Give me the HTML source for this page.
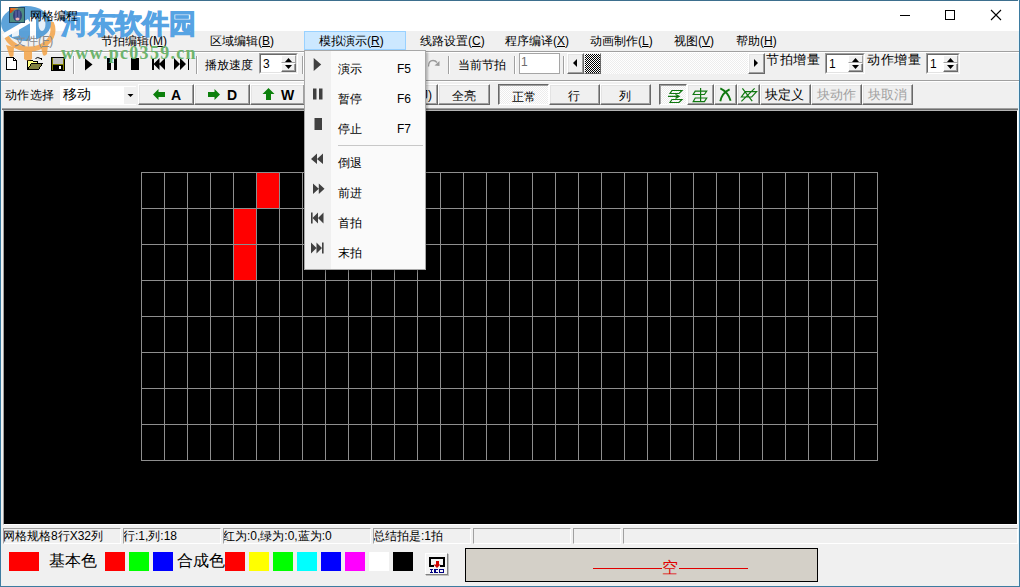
<!DOCTYPE html>
<html><head><meta charset="utf-8">
<style>
*{margin:0;padding:0;box-sizing:border-box}
html,body{width:1020px;height:587px;overflow:hidden;background:#f0f0f0;font-family:"Liberation Sans",sans-serif;color:#000}
.a{position:absolute}
.t{position:absolute;white-space:nowrap;font-size:12px;line-height:14px;font-weight:500}
/* raised button */
.btn{position:absolute;background:#f0f0f0;border-top:1px solid #fff;border-left:1px solid #fff;border-right:1px solid #696969;border-bottom:1px solid #696969;box-shadow:inset -1px -1px 0 #a0a0a0, inset 1px 1px 0 #e3e3e3;text-align:center;font-size:13px;white-space:nowrap}
.pbtn{position:absolute;background-color:#f6f6f6;background-image:repeating-conic-gradient(#fff 0 25%,#ececec 0 50%);background-size:2px 2px;border-top:1px solid #696969;border-left:1px solid #696969;border-right:1px solid #fff;border-bottom:1px solid #fff;box-shadow:inset 1px 1px 0 #a0a0a0;text-align:center;font-size:13px;white-space:nowrap}
.sep{position:absolute;width:2px;border-left:1px solid #a0a0a0;border-right:1px solid #fff}
.spin{position:absolute;background:#fff;border-top:1px solid #a0a0a0;border-left:1px solid #a0a0a0;border-right:1px solid #fff;border-bottom:1px solid #fff;box-shadow:inset 1px 1px 0 #696969, inset -1px -1px 0 #e3e3e3}
.panel{position:absolute;top:528px;height:16px;border-top:1px solid #a0a0a0;border-left:1px solid #a0a0a0;border-right:1px solid #fff;border-bottom:1px solid #fff;font-size:12px;line-height:14px;padding-left:0;text-indent:-1px;white-space:nowrap;overflow:hidden;font-weight:500}
.sw{position:absolute;top:552px;width:20px;height:19px}
.mi{position:absolute;left:338px;font-size:12px;line-height:14px;color:#000;font-weight:500}
.mk{position:absolute;left:397px;font-size:12px;line-height:14px}
</style></head><body>
<!-- window border -->
<div class="a" style="left:0;top:0;width:1020px;height:1px;background:#3d6f8e"></div>
<div class="a" style="left:0;top:0;width:1px;height:587px;background:#3d7ba0"></div>
<div class="a" style="left:1018px;top:0;width:2px;height:587px;background:#3d7ba0;border-left:1px solid #e4f4fb"></div>
<div class="a" style="left:0;top:586px;width:1020px;height:1px;background:#3d7ba0"></div>

<!-- title bar -->
<div class="a" style="left:1px;top:1px;width:1018px;height:30px;background:#fff"></div>

<div class="a" style="left:900px;top:15px;width:10px;height:1px;background:#000"></div>
<div class="a" style="left:945px;top:10px;width:10px;height:10px;border:1px solid #000"></div>
<svg class="a" style="left:990px;top:9px" width="12" height="12"><path d="M1 1L11 11M11 1L1 11" stroke="#000" stroke-width="1.1"/></svg>

<!-- menubar -->
<div class="a" style="left:1px;top:51px;width:1018px;height:1px;background:#a0a0a0"></div>
<div class="a" style="left:1px;top:52px;width:1018px;height:1px;background:#fff"></div>

<div class="t" style="left:101px;top:34px">节拍编辑(<u>M</u>)</div>
<div class="t" style="left:210px;top:34px">区域编辑(<u>B</u>)</div>
<div class="a" style="left:304px;top:31px;width:102px;height:19px;background:#cce8ff;border:1px solid #99d1ff"></div>
<div class="t" style="left:319px;top:34px">模拟演示(<u>R</u>)</div>
<div class="t" style="left:420px;top:34px">线路设置(<u>C</u>)</div>
<div class="t" style="left:505px;top:34px">程序编译(<u>X</u>)</div>
<div class="t" style="left:590px;top:34px">动画制作(<u>L</u>)</div>
<div class="t" style="left:674px;top:34px">视图(<u>V</u>)</div>
<div class="t" style="left:736px;top:34px">帮助(<u>H</u>)</div>

<!-- toolbar1 -->
<div class="a" style="left:1px;top:80px;width:1018px;height:1px;background:#a0a0a0"></div>
<div class="a" style="left:1px;top:81px;width:1018px;height:1px;background:#fff"></div>


<!-- toolbar1 icons -->
<svg class="a" style="left:0;top:52px" width="200" height="26" shape-rendering="crispEdges">
<!-- new -->
<path d="M6.5 5.5H13.5L16.5 8.5V17.5H6.5Z" fill="#fff" stroke="#000"/>
<path d="M13.5 5.5V8.5H16.5" fill="none" stroke="#000"/>
<!-- open -->
<path d="M27.5 8.5H32.5L33.5 9.5H37.5V11.5H31.5L27.5 17.5Z" fill="#ffff80" stroke="#000"/>
<path d="M27.5 17.5L31.5 11.5H42.5L38.5 17.5Z" fill="#808040" stroke="#000"/>
<path d="M35.5 6.5Q37.5 4.5 40.5 6.5" fill="none" stroke="#000" shape-rendering="auto"/>
<path d="M39 6H42V9Z" fill="#000"/>
<!-- save -->
<rect x="51.5" y="5.5" width="13" height="13" fill="#808000" stroke="#000"/>
<rect x="53" y="6" width="10" height="6" fill="#c0c0c0"/>
<rect x="53" y="13" width="10" height="5" fill="#000"/>
<rect x="59" y="14" width="2" height="3" fill="#fff"/>
<!-- play -->
<path d="M85 6.5L92.5 12.5L85 18.5Z" fill="#000" shape-rendering="auto"/>
<rect x="107" y="6" width="3.5" height="12" fill="#000"/>
<rect x="113.5" y="6" width="3.5" height="12" fill="#000"/>
<rect x="131" y="6" width="8" height="12" fill="#000"/>
<rect x="152" y="6" width="1.5" height="12" fill="#000"/>
<path d="M153.5 12L159.5 6V18Z M159 12L165 6V18Z" fill="#000" shape-rendering="auto"/>
<path d="M174 6L180 12L174 18Z M180 6L186 12L180 18Z" fill="#000" shape-rendering="auto"/>
<rect x="187.5" y="6" width="1.5" height="12" fill="#000"/>
</svg>
<div class="sep" style="left:73px;top:56px;height:18px"></div>
<div class="sep" style="left:196px;top:56px;height:18px"></div>
<div class="t" style="left:205px;top:57px;font-size:12px;line-height:16px">播放速度</div>
<div class="a" style="left:259px;top:53px;width:39px;height:21px;border-top:1px solid #a0a0a0;border-left:1px solid #a0a0a0;border-right:1px solid #fff;border-bottom:1px solid #fff">
<div class="a" style="left:0;top:0;right:0;bottom:0;border-top:1px solid #696969;border-left:1px solid #696969;border-right:1px solid #e3e3e3;border-bottom:1px solid #e3e3e3;background:#fff"></div>
<div class="t" style="left:3px;top:3px;font-size:12px;line-height:14px;font-weight:400">3</div>
<div class="a" style="right:1px;top:1px;width:15px;height:8px;background:#f0f0f0;border-top:1px solid #fff;border-left:1px solid #fff;border-right:1px solid #a0a0a0;border-bottom:1px solid #a0a0a0"><svg class="a" style="left:3px;top:2px" width="8" height="5"><path d="M0 4L3.5 0L7 4Z" fill="#000"/></svg></div>
<div class="a" style="right:1px;bottom:1px;width:15px;height:9px;background:#f0f0f0;border-top:1px solid #fff;border-left:1px solid #fff;border-right:1px solid #696969;border-bottom:1px solid #696969;box-shadow:inset -1px -1px 0 #a0a0a0"><svg class="a" style="left:3px;top:1px" width="8" height="5"><path d="M0 0L3.5 4L7 0Z" fill="#000"/></svg></div>
</div>
<div class="sep" style="left:302px;top:56px;height:18px"></div>
<!-- hidden under menu: undo/redo -->
<svg class="a" style="left:425px;top:56px" width="16" height="14"><path d="M3.5 10.5Q3.5 4.5 8 4.5Q10.5 4.5 12 6.5" fill="none" stroke="#9a9a9a" stroke-width="1.3"/><path d="M9.5 9.5L14.5 5V10Z" fill="#9a9a9a"/></svg>
<div class="sep" style="left:448px;top:56px;height:18px"></div>
<div class="t" style="left:458px;top:57px;font-size:12px;line-height:16px">当前节拍</div>
<div class="sep" style="left:514px;top:56px;height:18px"></div>
<div class="a" style="left:519px;top:53px;width:41px;height:21px;border:1px solid #a5a5a5;background:#fff"></div>
<div class="t" style="left:521px;top:55px;font-size:12px;line-height:14px;color:#6d6d6d">1</div>
<div class="sep" style="left:563px;top:56px;height:18px"></div>
<!-- scrollbar -->
<div class="a" style="left:567px;top:53px;width:198px;height:21px;background-color:#f8f8f8;background-image:repeating-conic-gradient(#fff 0 25%,#ededed 0 50%);background-size:2px 2px"></div>
<div class="btn" style="left:567px;top:53px;width:17px;height:21px"></div>
<svg class="a" style="left:572px;top:59px" width="6" height="8"><path d="M5 0V8L1 4Z" fill="#000"/></svg>
<div class="a" style="left:584px;top:53px;width:17px;height:21px;background-color:#808080;background-image:repeating-conic-gradient(#000 0 25%,#fff 0 50%);background-size:2px 2px;border-right:1px solid #696969;border-bottom:1px solid #696969;border-top:1px solid #f0f0f0;border-left:1px solid #f0f0f0"></div>
<div class="btn" style="left:748px;top:53px;width:17px;height:21px"></div>
<svg class="a" style="left:753px;top:59px" width="6" height="8"><path d="M1 0V8L5 4Z" fill="#000"/></svg>
<div class="t" style="left:766px;top:52px;font-size:13px;line-height:16px;letter-spacing:0.5px">节拍增量</div>
<div class="a" style="left:825px;top:53px;width:40px;height:21px;border-top:1px solid #a0a0a0;border-left:1px solid #a0a0a0;border-right:1px solid #fff;border-bottom:1px solid #fff">
<div class="a" style="left:0;top:0;right:0;bottom:0;border-top:1px solid #696969;border-left:1px solid #696969;border-right:1px solid #e3e3e3;border-bottom:1px solid #e3e3e3;background:#fff"></div>
<div class="t" style="left:3px;top:3px;font-size:12px;line-height:14px;font-weight:400">1</div>
<div class="a" style="right:1px;top:1px;width:15px;height:8px;background:#f0f0f0;border-top:1px solid #fff;border-left:1px solid #fff;border-right:1px solid #a0a0a0;border-bottom:1px solid #a0a0a0"><svg class="a" style="left:3px;top:2px" width="8" height="5"><path d="M0 4L3.5 0L7 4Z" fill="#000"/></svg></div>
<div class="a" style="right:1px;bottom:1px;width:15px;height:9px;background:#f0f0f0;border-top:1px solid #fff;border-left:1px solid #fff;border-right:1px solid #696969;border-bottom:1px solid #696969;box-shadow:inset -1px -1px 0 #a0a0a0"><svg class="a" style="left:3px;top:1px" width="8" height="5"><path d="M0 0L3.5 4L7 0Z" fill="#000"/></svg></div>
</div>
<div class="t" style="left:867px;top:52px;font-size:13px;line-height:16px;letter-spacing:0.5px">动作增量</div>
<div class="a" style="left:926px;top:53px;width:34px;height:21px;border-top:1px solid #a0a0a0;border-left:1px solid #a0a0a0;border-right:1px solid #fff;border-bottom:1px solid #fff">
<div class="a" style="left:0;top:0;right:0;bottom:0;border-top:1px solid #696969;border-left:1px solid #696969;border-right:1px solid #e3e3e3;border-bottom:1px solid #e3e3e3;background:#fff"></div>
<div class="t" style="left:3px;top:3px;font-size:12px;line-height:14px;font-weight:400">1</div>
<div class="a" style="right:1px;top:1px;width:15px;height:8px;background:#f0f0f0;border-top:1px solid #fff;border-left:1px solid #fff;border-right:1px solid #a0a0a0;border-bottom:1px solid #a0a0a0"><svg class="a" style="left:3px;top:2px" width="8" height="5"><path d="M0 4L3.5 0L7 4Z" fill="#000"/></svg></div>
<div class="a" style="right:1px;bottom:1px;width:15px;height:9px;background:#f0f0f0;border-top:1px solid #fff;border-left:1px solid #fff;border-right:1px solid #696969;border-bottom:1px solid #696969;box-shadow:inset -1px -1px 0 #a0a0a0"><svg class="a" style="left:3px;top:1px" width="8" height="5"><path d="M0 0L3.5 4L7 0Z" fill="#000"/></svg></div>
</div>

<!-- toolbar2 -->
<div class="t" style="left:5px;top:87px;font-size:12px;line-height:16px;letter-spacing:0.3px">动作选择</div>
<div class="a" style="left:60px;top:86px;width:76px;height:19px;background:#fff"></div>
<div class="a" style="left:124px;top:87px;width:12px;height:17px;background:#f0f0f0"></div>
<svg class="a" style="left:127px;top:94px" width="7" height="4"><path d="M0.5 0H6.5L3.5 3Z" fill="#000"/></svg>
<div class="t" style="left:63px;top:85px;font-size:14px;line-height:18px">移动</div>
<div class="btn" style="left:138px;top:84px;width:56px;height:21px"></div>
<svg class="a" style="left:153px;top:89px" width="13" height="11"><path d="M0 5.5L5.5 0V3H12V8H5.5V11Z" fill="#0c800c"/></svg>
<div class="t" style="left:171px;top:87px;font-size:14px;line-height:16px;font-weight:bold">A</div>
<div class="btn" style="left:194px;top:84px;width:56px;height:21px"></div>
<svg class="a" style="left:207px;top:89px" width="13" height="11"><path d="M13 5.5L7.5 0V3H1V8H7.5V11Z" fill="#0c800c"/></svg>
<div class="t" style="left:227px;top:87px;font-size:14px;line-height:16px;font-weight:bold">D</div>
<div class="btn" style="left:250px;top:84px;width:55px;height:21px"></div>
<svg class="a" style="left:262px;top:88px" width="13" height="12"><path d="M6.5 0L12.5 6H9V12H4V6H0.5Z" fill="#0c800c"/></svg>
<div class="t" style="left:281px;top:87px;font-size:14px;line-height:16px;font-weight:bold">W</div>
<div class="btn" style="left:305px;top:84px;width:56px;height:21px"></div>
<div class="btn" style="left:361px;top:84px;width:44px;height:21px"></div>
<div class="btn" style="left:405px;top:84px;width:33px;height:21px"><span class="a" style="right:5px;top:3px;font-size:12px;line-height:14px">全灭(J)</span></div>
<div class="btn" style="left:438px;top:84px;width:52px;height:21px"></div>
<div class="t" style="left:452px;top:88px;font-size:12px;line-height:16px">全亮</div>
<div class="pbtn" style="left:498px;top:84px;width:51px;height:21px"></div>
<div class="t" style="left:512px;top:89px;font-size:12px;line-height:16px">正常</div>
<div class="btn" style="left:549px;top:84px;width:51px;height:21px"></div>
<div class="t" style="left:568px;top:88px;font-size:12px;line-height:16px">行</div>
<div class="btn" style="left:600px;top:84px;width:51px;height:21px"></div>
<div class="t" style="left:619px;top:88px;font-size:12px;line-height:16px">列</div>
<div class="pbtn" style="left:659px;top:84px;width:28px;height:21px"></div>
<div class="btn" style="left:687px;top:84px;width:27px;height:21px"></div>
<div class="btn" style="left:714px;top:84px;width:23px;height:21px"></div>
<div class="btn" style="left:737px;top:84px;width:23px;height:21px"></div>
<svg class="a" style="left:0;top:0" width="1020" height="110" fill="none" stroke="#107810" stroke-width="1.2">
<path d="M672 90.5H682L679 93.5H670Z M672 99.5H682L679 102.5H670Z M668 96.3H678.5"/>
<path d="M675.5 94.5L679 96.3L675.5 98.3" stroke-width="1.4"/>
<path d="M695.2 91.1H706.7L704.4 94.5H693.2Z M695.2 98H706.7L704.4 101.6H693.2Z M700.6 88V101.6"/>
<path d="M720.3 88.4Q728 92 730.6 100.7 M729.6 89.4Q722 93 720.3 101.2" stroke-width="1.9"/>
<path d="M742.4 88.4L752.2 101.2 M754.6 88.4L741.4 101.4 M745.3 91.6H756.6L751.7 97H741.4Z"/>
</svg>
<div class="btn" style="left:760px;top:84px;width:51px;height:21px"></div>
<div class="t" style="left:765px;top:87px;font-size:13px;line-height:16px;letter-spacing:0px">块定义</div>
<div class="btn" style="left:811px;top:84px;width:51px;height:21px"></div>
<div class="t" style="left:817px;top:87px;font-size:13px;line-height:16px;color:#a0a0a0">块动作</div>
<div class="btn" style="left:862px;top:84px;width:51px;height:21px"></div>
<div class="t" style="left:868px;top:87px;font-size:13px;line-height:16px;color:#a0a0a0">块取消</div>


<!-- canvas -->
<div class="a" style="left:2px;top:108px;width:1016px;height:1px;background:#a0a0a0"></div>
<div class="a" style="left:2px;top:109px;width:1016px;height:1px;background:#6e6e6e"></div>
<div class="a" style="left:3px;top:110px;width:1015px;height:415px;border-top:1px solid #b4b4b4;border-left:1px solid #a0a0a0;border-right:1px solid #fff;border-bottom:1px solid #fff;background:#000"></div>

<!-- grid -->
<svg class="a" style="left:0;top:0" width="1020" height="587" shape-rendering="crispEdges">
<rect x="257" y="173" width="22" height="35" fill="#ff0000"/>
<rect x="234" y="209" width="22" height="71" fill="#ff0000"/>
<path d="M141.5 172V461M164.5 172V461M187.5 172V461M210.5 172V461M233.5 172V461M256.5 172V461M279.5 172V461M302.5 172V461M325.5 172V461M348.5 172V461M371.5 172V461M394.5 172V461M417.5 172V461M440.5 172V461M463.5 172V461M486.5 172V461M509.5 172V461M532.5 172V461M555.5 172V461M578.5 172V461M601.5 172V461M624.5 172V461M647.5 172V461M670.5 172V461M693.5 172V461M716.5 172V461M739.5 172V461M762.5 172V461M785.5 172V461M808.5 172V461M831.5 172V461M854.5 172V461M877.5 172V461M141 172.5H878M141 208.5H878M141 244.5H878M141 280.5H878M141 316.5H878M141 352.5H878M141 388.5H878M141 424.5H878M141 460.5H878" stroke="#8e8e8e" stroke-width="1" fill="none"/>
</svg>



<!-- watermark -->
<svg class="a" style="left:0;top:0" width="70" height="70">
<defs><clipPath id="lc"><rect x="0" y="33" width="70" height="40"/><rect x="40" y="22" width="30" height="20"/></clipPath></defs>
<g opacity="0.82">
<ellipse cx="29" cy="30" rx="24" ry="19" fill="none" stroke="#f4a040" stroke-width="5" clip-path="url(#lc)"/>
<path d="M6 45 L14 47 L13.5 56 Q11 58 9.5 56Z M24 49 H32 V59 Q28 62 24 59Z M41 48 L48 45 L47 54 Q44.5 57 43 55Z" fill="#f4a040"/>
<ellipse cx="26" cy="23.5" rx="25" ry="17.5" fill="#3a8fd2"/>
<path d="M2 34 L28 19 L30.5 23 L4 38.5Z" fill="#fff"/>
<path d="M30 17 H36 V41.5 H30Z" fill="#fff"/>
<path d="M12 31 L19 27 L19 36 L12 37Z" fill="#fff" opacity="0.9"/>
<ellipse cx="42" cy="24" rx="3.5" ry="7" fill="#fff" opacity="0.85"/>
</g>
</svg>
<div class="t" style="left:61px;top:7px;font-family:'Liberation Serif',serif;font-weight:bold;font-size:27px;line-height:34px;color:#56a3e3;-webkit-text-stroke:1px #56a3e3">河东软件园</div>
<div class="t" style="left:61px;top:43px;font-family:'Liberation Serif',serif;font-weight:bold;font-size:18px;line-height:20px;letter-spacing:1.3px;color:#6db46d">www.pc0359.cn</div>
<svg class="a" style="left:9px;top:7px" width="16" height="16">
<rect x="0.5" y="0.5" width="15" height="15" fill="#4d8c80" stroke="#244a66"/>
<path d="M1 1H7L5 3L2 6H1Z" fill="#d04a10"/>
<path d="M2 2H9" stroke="#f0a040" stroke-width="1"/>
<ellipse cx="8.5" cy="8.5" rx="4.5" ry="6" fill="#34407a"/>
<path d="M7 3.5V12 M10 3.5V12" stroke="#6a70b0" stroke-width="1"/>
<ellipse cx="8.5" cy="12" rx="2" ry="1.5" fill="#f0b0b0"/>
</svg>
<div class="t" style="left:30px;top:9px;font-size:12px">网格编程</div>
<div class="t" style="left:14px;top:34px;color:#8a8a8a">文件(<u>F</u>)</div>
<!-- dropdown menu -->
<div class="a" style="left:304px;top:50px;width:122px;height:220px;background:#fafafa;border:1px solid #a8a8a8;box-shadow:2px 2px 2px rgba(0,0,0,0.25)"></div>
<div class="a" style="left:305px;top:51px;width:26px;height:218px;background:#f0f0f0"></div>
<div class="a" style="left:338px;top:145px;width:85px;height:1px;background:#c8c8c8"></div>
<svg class="a" style="left:305px;top:51px" width="26" height="218" fill="#404040">
<path d="M8.7 7L16.2 13.5L8.7 20Z"/>
<rect x="8" y="37.5" width="3.5" height="11"/><rect x="14" y="37.5" width="3.5" height="11"/>
<rect x="9.5" y="67" width="7.5" height="12"/>
<path d="M6 108L12 102.5V113Z M12 108L18 102.5V113Z"/>
<path d="M8 132.5V143L13.8 137.8Z M13.8 132.5V143L19.5 137.8Z"/>
<rect x="6" y="161.5" width="1.6" height="11"/><path d="M7.5 167L13 161.5V172.5Z M13 167L18.5 161.5V172.5Z"/>
<path d="M6 191.5V202.5L11.5 197Z M11.5 191.5V202.5L17 197Z"/><rect x="17" y="191.5" width="1.6" height="11"/>
</svg>
<div class="mi" style="top:62px">演示</div><div class="mk" style="top:62px">F5</div>
<div class="mi" style="top:92px">暂停</div><div class="mk" style="top:92px">F6</div>
<div class="mi" style="top:122px">停止</div><div class="mk" style="top:122px">F7</div>
<div class="mi" style="top:156px">倒退</div>
<div class="mi" style="top:186px">前进</div>
<div class="mi" style="top:216px">首拍</div>
<div class="mi" style="top:246px">末拍</div>

<!-- status bar -->
<div class="panel" style="left:3px;width:118px">网格规格8行X32列</div>
<div class="panel" style="left:123px;width:98px">行:1,列:18</div>
<div class="panel" style="left:223px;width:148px">红为:0,绿为:0,蓝为:0</div>
<div class="panel" style="left:373px;width:98px">总结拍是:1拍</div>
<div class="panel" style="left:473px;width:98px"></div>
<div class="panel" style="left:573px;width:48px"></div>
<div class="panel" style="left:623px;width:395px"></div>

<!-- color bar -->
<div class="sw" style="left:9px;width:30px;background:#f00"></div>
<div class="t" style="left:49px;top:551px;font-size:16px;line-height:20px;font-weight:400">基本色</div>
<div class="sw" style="left:105px;background:#f00"></div>
<div class="sw" style="left:129px;background:#0f0"></div>
<div class="sw" style="left:153px;background:#00f"></div>
<div class="t" style="left:177px;top:551px;font-size:16px;line-height:20px;font-weight:400">合成色</div>
<div class="sw" style="left:225px;background:#f00"></div>
<div class="sw" style="left:249px;background:#ff0"></div>
<div class="sw" style="left:273px;background:#0f0"></div>
<div class="sw" style="left:297px;background:#0ff"></div>
<div class="sw" style="left:321px;background:#00f"></div>
<div class="sw" style="left:345px;background:#f0f"></div>
<div class="sw" style="left:369px;background:#fff"></div>
<div class="sw" style="left:393px;background:#000"></div>
<div class="a" style="left:425px;top:553px;width:23px;height:22px;background:#f4f4f4;border-top:1px solid #fff;border-left:1px solid #fff;border-right:1px solid #808080;border-bottom:1px solid #808080;box-shadow:1px 1px 0 #c0c0c0"></div>
<svg class="a" style="left:425px;top:553px" width="23" height="22" shape-rendering="crispEdges">
<path d="M9 13H5V5H19V13H15" fill="none" stroke="#000" stroke-width="1.6"/>
<rect x="10.5" y="8" width="3" height="4" fill="#d00000"/><path d="M8.5 11.5H15.5L12 15Z" fill="#d00000" shape-rendering="auto"/>
<path d="M5 16.5H8M6.5 16.5V19.5M5 19.5H8" stroke="#000080" stroke-width="1.2" fill="none"/>
<path d="M13 16.5H10V19.5H13" stroke="#000080" stroke-width="1.2" fill="none"/>
<rect x="14.5" y="16.5" width="4" height="3" stroke="#000080" stroke-width="1.2" fill="none"/>
</svg>
<div class="a" style="left:465px;top:548px;width:353px;height:34px;background:#d4d0c8;border:1px solid #000"></div>
<div class="a" style="left:593px;top:568px;width:69px;height:1px;background:#e00000"></div>
<div class="a" style="left:679px;top:568px;width:69px;height:1px;background:#e00000"></div>
<div class="t" style="left:662px;top:559px;font-size:16px;line-height:18px;color:#e00000;font-weight:400">空</div>

</body></html>
